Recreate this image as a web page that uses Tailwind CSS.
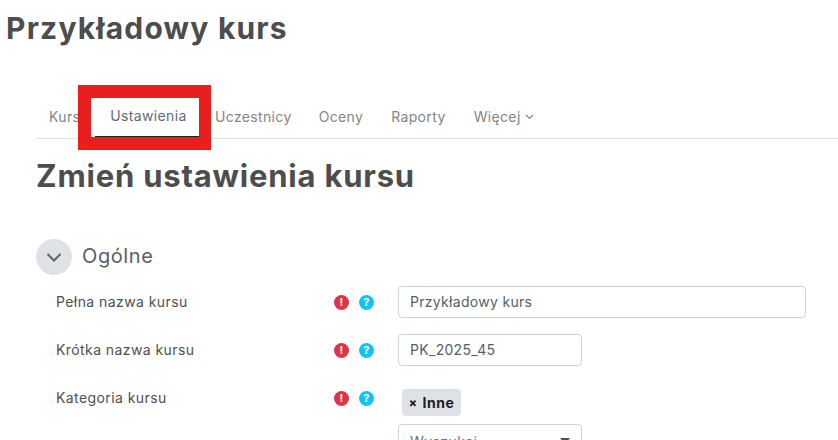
<!DOCTYPE html>
<html>

<head>
    <meta charset="UTF-8">
    <title>Zmień ustawienia kursu</title>
    <script src="https://cdn.jsdelivr.net/npm/@tailwindcss/browser@4"></script>
</head>

<body class="bg-white h-[440px] w-[838px] overflow-hidden relative font-['Inter','Liberation_Sans',sans-serif] text-[#4f4f4f]">
    <h1 class="pl-[6px] pt-[11px] text-[30px] leading-[34px] tracking-[1.2px] font-bold text-[#4d4d4d]">Przykładowy kurs</h1>

    <!-- Tabs -->
    <nav class="ml-[36px] mt-[50px] h-[44px] border-b border-[#dee2e6] flex items-center text-[14px] tracking-[0.35px] text-[#858585]">
        <a class="ml-[13px] w-[31px] overflow-hidden">Kurs</a>
        <a class="ml-[15px] w-[107px] h-full flex items-center justify-center text-[#5f6b77] border-b-2 border-[#1d2125] bg-white">Ustawienia</a>
        <a class="ml-[13px]">Uczestnicy</a>
        <a class="ml-[27px]">Oceny</a>
        <a class="ml-[28px]">Raporty</a>
        <a class="ml-[28px] flex items-center gap-[4px]">Więcej
            <svg width="9" height="6" viewBox="0 0 9 6" fill="none" stroke="#858585" stroke-width="1.2"><path d="M1 1l3.5 3.5L8 1" /></svg>
        </a>
    </nav>

    <h2 class="pl-[36px] pt-[19px] text-[31px] leading-[36px] tracking-[0.8px] font-bold text-[#4d4d4d]">Zmień ustawienia kursu</h2>

    <!-- Section header -->
    <div class="ml-[36px] mt-[45px] flex items-center gap-[10px]">
        <span class="w-[36px] h-[36px] rounded-full bg-[#dee2e6] flex items-center justify-center">
            <svg width="16" height="9" viewBox="0 0 16 9" fill="none" stroke="#5f6468" stroke-width="2"><path d="M1.5 1l6.5 6.5L14.5 1" /></svg>
        </span>
        <span class="text-[20px] leading-[34px] pb-[2px] tracking-[0.6px] text-[#55606b]">Ogólne</span>
    </div>

    <!-- Form rows -->
    <div class="mt-[11px] ml-[56px] flex flex-col gap-[16px] text-[14px] tracking-[0.42px]">
        <div class="flex h-[32px]">
            <label class="w-[278px] leading-[32px] text-[#4f4f4f]">Pełna nazwa kursu</label>
            <div class="w-[64px] flex items-center gap-[10px]">
                <span class="w-[15px] h-[15px] rounded-full bg-[#dc3545] text-white text-[11px] leading-[15px] font-bold text-center">!</span>
                <span class="w-[15px] h-[15px] rounded-full bg-[#0fc5f0] text-white text-[11px] leading-[15px] font-bold text-center">?</span>
            </div>
            <input class="w-[408px] h-[32px] px-[11px] pb-[1px] border border-[#ced4da] rounded-[4px] text-[#55606b] text-[14px] tracking-[0.3px]" value="Przykładowy kurs">
        </div>
        <div class="flex h-[32px]">
            <label class="w-[278px] leading-[32px] text-[#4f4f4f]">Krótka nazwa kursu</label>
            <div class="w-[64px] flex items-center gap-[10px]">
                <span class="w-[15px] h-[15px] rounded-full bg-[#dc3545] text-white text-[11px] leading-[15px] font-bold text-center">!</span>
                <span class="w-[15px] h-[15px] rounded-full bg-[#0fc5f0] text-white text-[11px] leading-[15px] font-bold text-center">?</span>
            </div>
            <input class="w-[184px] h-[32px] px-[11px] pb-[1px] border border-[#ced4da] rounded-[4px] text-[#55606b] text-[14px] tracking-[0.3px]" value="PK_2025_45">
        </div>
        <div class="flex">
            <label class="w-[278px] leading-[32px] text-[#4f4f4f]">Kategoria kursu</label>
            <div class="w-[64px] h-[32px] flex items-center gap-[10px]">
                <span class="w-[15px] h-[15px] rounded-full bg-[#dc3545] text-white text-[11px] leading-[15px] font-bold text-center">!</span>
                <span class="w-[15px] h-[15px] rounded-full bg-[#0fc5f0] text-white text-[11px] leading-[15px] font-bold text-center">?</span>
            </div>
            <div class="flex flex-col items-start mt-[7px]">
                <span class="ml-[4px] h-[27px] w-[59px] rounded-[4px] bg-[#dee2e6] flex items-center justify-center gap-[5px] text-[14px] font-bold tracking-[0.5px] text-[#1d2125]"><span class="text-[12px] font-extrabold">×</span>Inne</span>
                <div class="mt-[8px] w-[184px] h-[32px] px-[11px] pt-[2px] border border-[#ced4da] rounded-[4px] flex items-center justify-between text-[#6a737b]">
                    <span>Wyszukaj</span>
                    <span class="w-0 h-0 border-x-[5px] border-x-transparent border-t-[6px] border-t-[#495057]"></span>
                </div>
            </div>
        </div>
    </div>

    <!-- Red highlight drawn over the screenshot -->
    <div class="absolute left-[78px] top-[85px] w-[133px] h-[65px] border-[13px] border-r-[12px] border-[#e91e1e] pointer-events-none"></div>
</body>

</html>
